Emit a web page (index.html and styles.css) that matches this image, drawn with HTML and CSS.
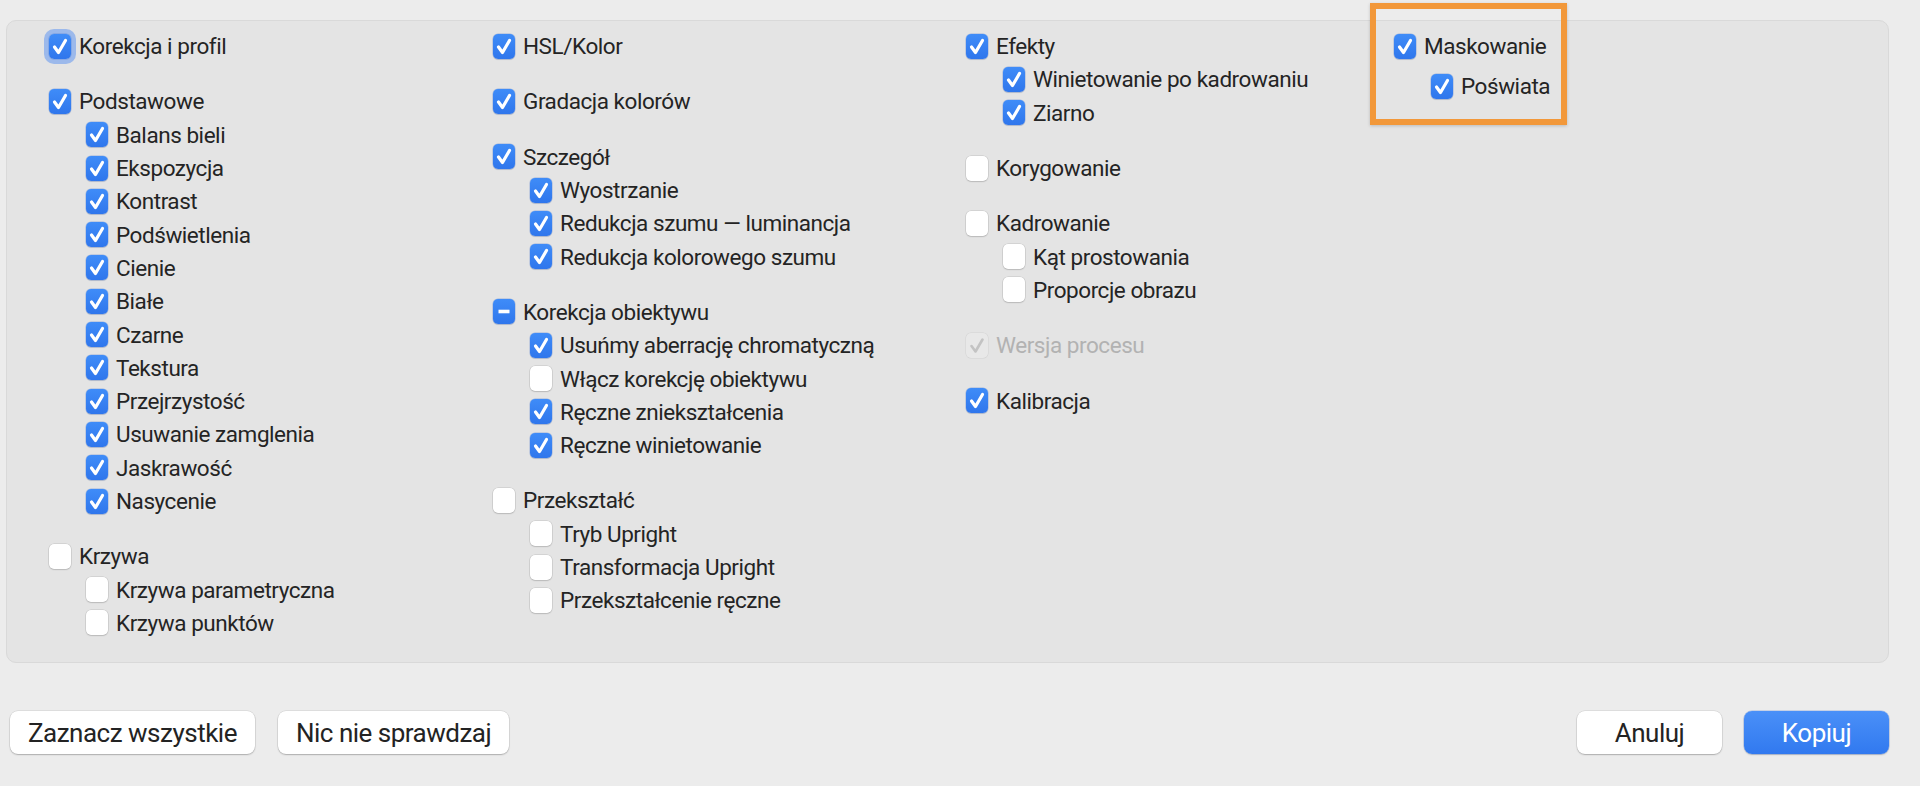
FILE: index.html
```html
<!DOCTYPE html>
<html lang="pl">
<head>
<meta charset="utf-8">
<title>Kopiuj ustawienia</title>
<link rel="stylesheet" href="styles.css">
</head>
<body>
<div class="dialog">
  <div class="panel">
    <div class="col col1">
      <div class="group">
        <div class="row"><span class="cb on focus"><svg viewBox="0 0 22 25"><path d="M5.5 13 L9.5 18.5 L16.5 6.5"/></svg></span><span class="lbl">Korekcja i profil</span></div>
      </div>
      <div class="group">
        <div class="row"><span class="cb on"><svg viewBox="0 0 22 25"><path d="M5.5 13 L9.5 18.5 L16.5 6.5"/></svg></span><span class="lbl">Podstawowe</span></div>
        <div class="row sub"><span class="cb on"><svg viewBox="0 0 22 25"><path d="M5.5 13 L9.5 18.5 L16.5 6.5"/></svg></span><span class="lbl">Balans bieli</span></div>
        <div class="row sub"><span class="cb on"><svg viewBox="0 0 22 25"><path d="M5.5 13 L9.5 18.5 L16.5 6.5"/></svg></span><span class="lbl">Ekspozycja</span></div>
        <div class="row sub"><span class="cb on"><svg viewBox="0 0 22 25"><path d="M5.5 13 L9.5 18.5 L16.5 6.5"/></svg></span><span class="lbl">Kontrast</span></div>
        <div class="row sub"><span class="cb on"><svg viewBox="0 0 22 25"><path d="M5.5 13 L9.5 18.5 L16.5 6.5"/></svg></span><span class="lbl">Podświetlenia</span></div>
        <div class="row sub"><span class="cb on"><svg viewBox="0 0 22 25"><path d="M5.5 13 L9.5 18.5 L16.5 6.5"/></svg></span><span class="lbl">Cienie</span></div>
        <div class="row sub"><span class="cb on"><svg viewBox="0 0 22 25"><path d="M5.5 13 L9.5 18.5 L16.5 6.5"/></svg></span><span class="lbl">Białe</span></div>
        <div class="row sub"><span class="cb on"><svg viewBox="0 0 22 25"><path d="M5.5 13 L9.5 18.5 L16.5 6.5"/></svg></span><span class="lbl">Czarne</span></div>
        <div class="row sub"><span class="cb on"><svg viewBox="0 0 22 25"><path d="M5.5 13 L9.5 18.5 L16.5 6.5"/></svg></span><span class="lbl">Tekstura</span></div>
        <div class="row sub"><span class="cb on"><svg viewBox="0 0 22 25"><path d="M5.5 13 L9.5 18.5 L16.5 6.5"/></svg></span><span class="lbl">Przejrzystość</span></div>
        <div class="row sub"><span class="cb on"><svg viewBox="0 0 22 25"><path d="M5.5 13 L9.5 18.5 L16.5 6.5"/></svg></span><span class="lbl">Usuwanie zamglenia</span></div>
        <div class="row sub"><span class="cb on"><svg viewBox="0 0 22 25"><path d="M5.5 13 L9.5 18.5 L16.5 6.5"/></svg></span><span class="lbl">Jaskrawość</span></div>
        <div class="row sub"><span class="cb on"><svg viewBox="0 0 22 25"><path d="M5.5 13 L9.5 18.5 L16.5 6.5"/></svg></span><span class="lbl">Nasycenie</span></div>
      </div>
      <div class="group">
        <div class="row"><span class="cb"></span><span class="lbl">Krzywa</span></div>
        <div class="row sub"><span class="cb"></span><span class="lbl">Krzywa parametryczna</span></div>
        <div class="row sub"><span class="cb"></span><span class="lbl">Krzywa punktów</span></div>
      </div>
    </div>

    <div class="col col2">
      <div class="group">
        <div class="row"><span class="cb on"><svg viewBox="0 0 22 25"><path d="M5.5 13 L9.5 18.5 L16.5 6.5"/></svg></span><span class="lbl">HSL/Kolor</span></div>
      </div>
      <div class="group">
        <div class="row"><span class="cb on"><svg viewBox="0 0 22 25"><path d="M5.5 13 L9.5 18.5 L16.5 6.5"/></svg></span><span class="lbl">Gradacja kolorów</span></div>
      </div>
      <div class="group">
        <div class="row"><span class="cb on"><svg viewBox="0 0 22 25"><path d="M5.5 13 L9.5 18.5 L16.5 6.5"/></svg></span><span class="lbl">Szczegół</span></div>
        <div class="row sub"><span class="cb on"><svg viewBox="0 0 22 25"><path d="M5.5 13 L9.5 18.5 L16.5 6.5"/></svg></span><span class="lbl">Wyostrzanie</span></div>
        <div class="row sub"><span class="cb on"><svg viewBox="0 0 22 25"><path d="M5.5 13 L9.5 18.5 L16.5 6.5"/></svg></span><span class="lbl">Redukcja szumu — luminancja</span></div>
        <div class="row sub"><span class="cb on"><svg viewBox="0 0 22 25"><path d="M5.5 13 L9.5 18.5 L16.5 6.5"/></svg></span><span class="lbl">Redukcja kolorowego szumu</span></div>
      </div>
      <div class="group">
        <div class="row"><span class="cb on mixed"><svg viewBox="0 0 22 25"><path d="M5.5 12.5 L16.5 12.5"/></svg></span><span class="lbl">Korekcja obiektywu</span></div>
        <div class="row sub"><span class="cb on"><svg viewBox="0 0 22 25"><path d="M5.5 13 L9.5 18.5 L16.5 6.5"/></svg></span><span class="lbl">Usuńmy aberrację chromatyczną</span></div>
        <div class="row sub"><span class="cb"></span><span class="lbl">Włącz korekcję obiektywu</span></div>
        <div class="row sub"><span class="cb on"><svg viewBox="0 0 22 25"><path d="M5.5 13 L9.5 18.5 L16.5 6.5"/></svg></span><span class="lbl">Ręczne zniekształcenia</span></div>
        <div class="row sub"><span class="cb on"><svg viewBox="0 0 22 25"><path d="M5.5 13 L9.5 18.5 L16.5 6.5"/></svg></span><span class="lbl">Ręczne winietowanie</span></div>
      </div>
      <div class="group">
        <div class="row"><span class="cb"></span><span class="lbl">Przekształć</span></div>
        <div class="row sub"><span class="cb"></span><span class="lbl">Tryb Upright</span></div>
        <div class="row sub"><span class="cb"></span><span class="lbl">Transformacja Upright</span></div>
        <div class="row sub"><span class="cb"></span><span class="lbl">Przekształcenie ręczne</span></div>
      </div>
    </div>

    <div class="col col3">
      <div class="group">
        <div class="row"><span class="cb on"><svg viewBox="0 0 22 25"><path d="M5.5 13 L9.5 18.5 L16.5 6.5"/></svg></span><span class="lbl">Efekty</span></div>
        <div class="row sub"><span class="cb on"><svg viewBox="0 0 22 25"><path d="M5.5 13 L9.5 18.5 L16.5 6.5"/></svg></span><span class="lbl">Winietowanie po kadrowaniu</span></div>
        <div class="row sub"><span class="cb on"><svg viewBox="0 0 22 25"><path d="M5.5 13 L9.5 18.5 L16.5 6.5"/></svg></span><span class="lbl">Ziarno</span></div>
      </div>
      <div class="group">
        <div class="row"><span class="cb"></span><span class="lbl">Korygowanie</span></div>
      </div>
      <div class="group">
        <div class="row"><span class="cb"></span><span class="lbl">Kadrowanie</span></div>
        <div class="row sub"><span class="cb"></span><span class="lbl">Kąt prostowania</span></div>
        <div class="row sub"><span class="cb"></span><span class="lbl">Proporcje obrazu</span></div>
      </div>
      <div class="group">
        <div class="row disabled"><span class="cb dis"><svg viewBox="0 0 22 25"><path d="M5.5 13 L9.5 18.5 L16.5 6.5"/></svg></span><span class="lbl">Wersja procesu</span></div>
      </div>
      <div class="group">
        <div class="row"><span class="cb on"><svg viewBox="0 0 22 25"><path d="M5.5 13 L9.5 18.5 L16.5 6.5"/></svg></span><span class="lbl">Kalibracja</span></div>
      </div>
    </div>

    <div class="col col4">
      <div class="group">
        <div class="row"><span class="cb on"><svg viewBox="0 0 22 25"><path d="M5.5 13 L9.5 18.5 L16.5 6.5"/></svg></span><span class="lbl">Maskowanie</span></div>
        <div class="row sub spaced"><span class="cb on"><svg viewBox="0 0 22 25"><path d="M5.5 13 L9.5 18.5 L16.5 6.5"/></svg></span><span class="lbl">Poświata</span></div>
      </div>
    </div>
  </div>

  <div class="footer">
    <div class="btns">
      <button class="btn">Zaznacz wszystkie</button>
      <button class="btn">Nic nie sprawdzaj</button>
    </div>
    <div class="btns">
      <button class="btn fixed">Anuluj</button>
      <button class="btn fixed primary">Kopiuj</button>
    </div>
  </div>

  <div class="highlight"></div>
</div>
</body>
</html>
```

FILE: styles.css
```css
* { box-sizing: border-box; }

html, body {
  margin: 0;
  padding: 0;
  background: #ececec;
}

body {
  font-family: Roboto, "Liberation Sans", Arial, sans-serif;
  color: #242424;
  width: 1920px;
  height: 786px;
  overflow: hidden;
}

.dialog {
  position: relative;
  padding: 20px 31px 0 6px;
}

.panel {
  height: 643px;
  background: #e4e4e4;
  border: 1px solid #d9d9d9;
  border-radius: 10px;
  padding: 8.5px 0 0 42px;
  display: grid;
  grid-template-columns: 444px 473px 428px 1fr;
  align-items: start;
}

.group {
  display: flex;
  flex-direction: column;
  margin-bottom: 22px;
}

.row {
  display: flex;
  align-items: center;
  gap: 8px;
  height: 33.3px;
  font-size: 22.5px;
  letter-spacing: -0.45px;
  white-space: nowrap;
}

.row.sub { padding-left: 37px; }
.row.spaced { margin-top: 7px; }

.cb {
  flex: none;
  width: 22px;
  height: 25px;
  border-radius: 5px;
  background: #ffffff;
  box-shadow: 0 0 0 0.5px rgba(0,0,0,0.14), 0 1px 1.5px rgba(0,0,0,0.12);
  display: flex;
  align-items: center;
  justify-content: center;
}

.cb svg {
  width: 22px;
  height: 25px;
  display: block;
}

.cb svg path {
  fill: none;
  stroke: #ffffff;
  stroke-width: 3.2;
  stroke-linecap: round;
  stroke-linejoin: round;
}

.cb.on {
  background: linear-gradient(#3f8cf8, #2f76ec);
  box-shadow: 0 0 0 0.5px rgba(30,90,200,0.35), 0 1px 1px rgba(0,0,0,0.1);
}

.cb.mixed svg path { stroke-width: 3.6; stroke-linecap: butt; }

.cb.focus {
  box-shadow: 0 0 0 0.5px rgba(30,90,200,0.35), 0 0 0 5px rgba(96,150,240,0.55);
}

.cb.dis {
  background: #e8e8e8;
  box-shadow: 0 0 0 0.5px rgba(0,0,0,0.08);
}

.cb.dis svg path { stroke: #c3c3c3; stroke-width: 2.6; }

.row.disabled .lbl { color: #b2b2b2; }

.footer {
  display: flex;
  justify-content: space-between;
  padding: 48px 0 0 4px;
}

.btns {
  display: flex;
  gap: 23px;
}

.btn {
  height: 43px;
  padding: 0 18px;
  border: none;
  border-radius: 8px;
  background: #ffffff;
  box-shadow: 0 0 0 0.5px rgba(0,0,0,0.12), 0 1px 1.5px rgba(0,0,0,0.22);
  font-family: Roboto, "Liberation Sans", Arial, sans-serif;
  font-size: 26px;
  letter-spacing: -0.5px;
  color: #232323;
  white-space: nowrap;
}

.btn.fixed { width: 145px; padding: 0; }
.btns + .btns { gap: 22px; }

.btn.primary {
  background: linear-gradient(#4a90f8, #3179ef);
  color: #ffffff;
  box-shadow: 0 0 0 0.5px rgba(30,90,200,0.35), 0 1px 1.5px rgba(0,0,0,0.18);
}

.highlight {
  position: absolute;
  left: 1370px;
  top: 3px;
  width: 197px;
  height: 122px;
  border: 6px solid #f2983a;
  box-shadow: 0 1px 3px rgba(0,0,0,0.18);
  pointer-events: none;
}
```
